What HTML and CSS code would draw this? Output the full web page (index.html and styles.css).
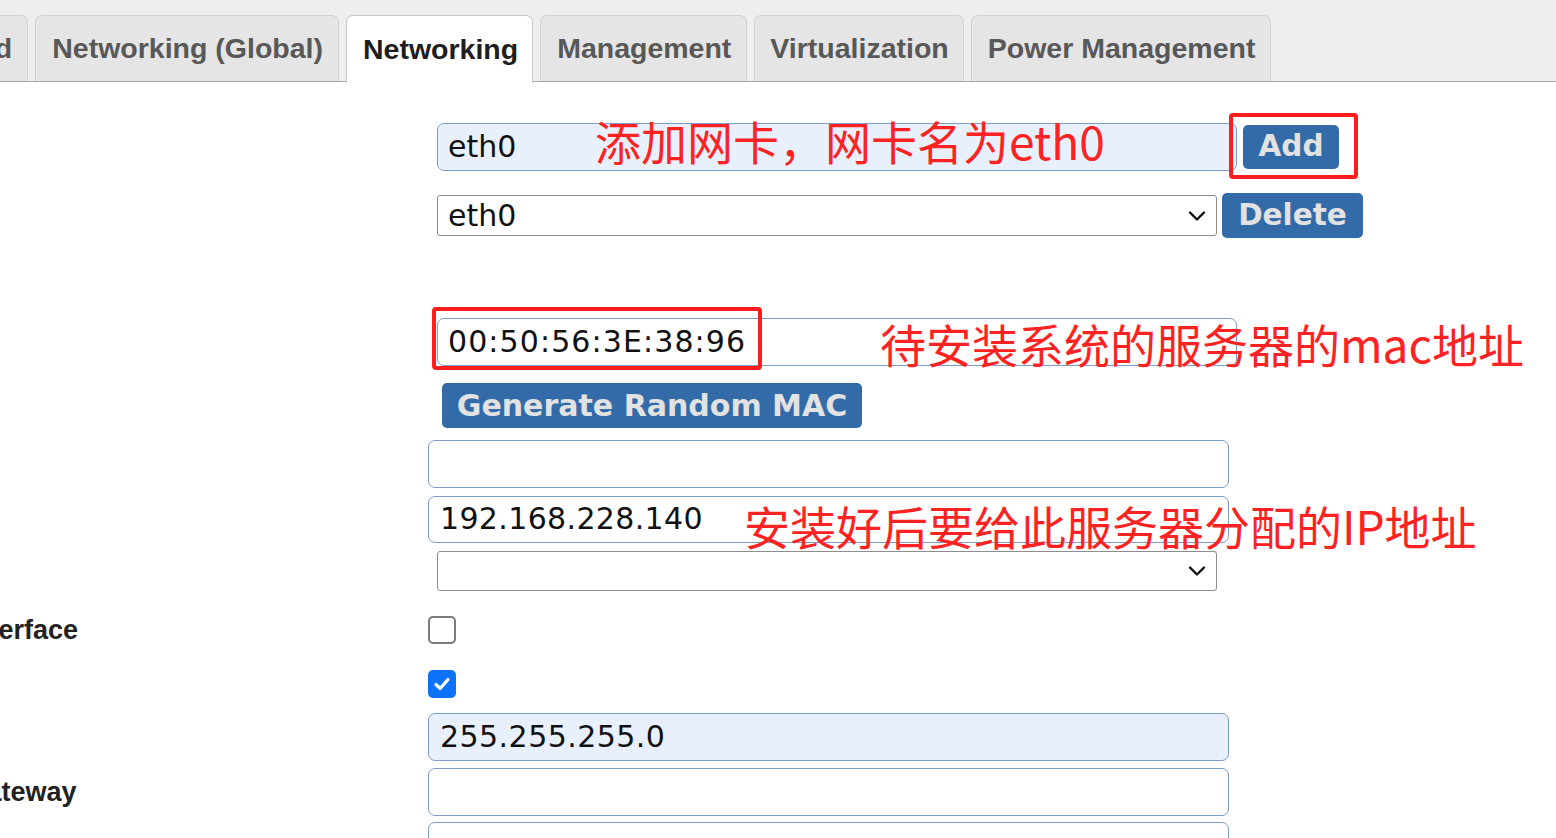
FILE: index.html
```html
<!DOCTYPE html>
<html lang="en">
<head>
<meta charset="utf-8">
<title>Edit System - Networking</title>
<link rel="stylesheet" href="styles.css">
</head>
<body>
<div class="page">
  <nav class="tabs">
    <span class="tab">Advanced</span>
    <span class="tab">Networking (Global)</span>
    <span class="tab tab-active">Networking</span>
    <span class="tab">Management</span>
    <span class="tab tab-virt">Virtualization</span>
    <span class="tab">Power Management</span>
  </nav>

  <form class="form">
    <div class="row row-name">
      <label class="lbl">Interface</label>
      <div class="field">
        <input class="text autofill inset" value="eth0">
        <button type="button" class="btn btn-add">Add</button>
        <span class="anno anno-name">添加网卡，网卡名为eth0</span>
        <span class="redbox redbox-add"></span>
      </div>
    </div>

    <div class="row row-select">
      <label class="lbl">Interfaces</label>
      <div class="field">
        <div class="select inset">
          <span>eth0</span>
          <svg class="chev" width="18" height="12" viewBox="0 0 18 12"><path d="M2 2.5 L9 9.5 L16 2.5" fill="none" stroke="#111" stroke-width="2.4" stroke-linecap="round" stroke-linejoin="round"/></svg>
        </div>
        <button type="button" class="btn btn-delete">Delete</button>
      </div>
    </div>

    <div class="row row-mac">
      <label class="lbl">MAC Address</label>
      <div class="field">
        <input class="text inset mac" value="00:50:56:3E:38:96">
        <span class="anno anno-mac">待安装系统的服务器的mac地址</span>
        <span class="redbox redbox-mac"></span>
      </div>
    </div>

    <div class="row row-gen">
      <span class="lbl"></span>
      <div class="field">
        <button type="button" class="btn btn-gen">Generate Random MAC</button>
      </div>
    </div>

    <div class="row row-mtu">
      <label class="lbl">MTU</label>
      <div class="field">
        <input class="text" value="">
      </div>
    </div>

    <div class="row row-ip">
      <label class="lbl">IP Address</label>
      <div class="field">
        <input class="text ip" value="192.168.228.140">
        <span class="anno anno-ip">安装好后要给此服务器分配的IP地址</span>
      </div>
    </div>

    <div class="row row-type">
      <label class="lbl">Interface Type</label>
      <div class="field">
        <div class="select select-short inset">
          <span></span>
          <svg class="chev" width="18" height="12" viewBox="0 0 18 12"><path d="M2 2.5 L9 9.5 L16 2.5" fill="none" stroke="#111" stroke-width="2.4" stroke-linecap="round" stroke-linejoin="round"/></svg>
        </div>
      </div>
    </div>

    <div class="row row-mgmt">
      <label class="lbl">Management Interface</label>
      <div class="field">
        <span class="check"></span>
      </div>
    </div>

    <div class="row row-static">
      <label class="lbl">Static</label>
      <div class="field">
        <span class="check check-on">
          <svg width="20" height="20" viewBox="0 0 20 20"><path d="M4 10.5 L8.2 14.5 L16 5.5" fill="none" stroke="#fff" stroke-width="3.2" stroke-linecap="round" stroke-linejoin="round"/></svg>
        </span>
      </div>
    </div>

    <div class="row row-mask">
      <label class="lbl">Subnet Mask</label>
      <div class="field">
        <input class="text autofill mask" value="255.255.255.0">
      </div>
    </div>

    <div class="row row-gw">
      <label class="lbl">Per-Interface Gateway</label>
      <div class="field">
        <input class="text" value="">
      </div>
    </div>

    <div class="row row-dns">
      <label class="lbl">DNS Name</label>
      <div class="field">
        <input class="text" value="">
      </div>
    </div>
  </form>
</div>
</body>
</html>
```

FILE: styles.css
```css
html, body {
  margin: 0;
  padding: 0;
  background: #ffffff;
  overflow: hidden;
}

.page {
  margin-left: -207px;
  font-family: "Liberation Sans", Arial, sans-serif;
}

/* ---------- tabs ---------- */
.tabs {
  display: flex;
  align-items: flex-start;
  gap: 7px;
  height: 66px;
  padding: 15px 0 0 66px;
  background: #eeeeee;
  border-bottom: 1px solid #a8a8a8;
}

.tab {
  display: flex;
  align-items: center;
  box-sizing: border-box;
  height: 66px;
  padding: 0 15px 0 16px;
  background: #e5e5e5;
  border: 1px solid #d2d2d2;
  border-bottom: none;
  border-radius: 7px 7px 0 0;
  font-weight: bold;
  font-size: 28.5px;
  color: #585858;
  white-space: nowrap;
}

.tab-active {
  height: 68px;
  padding: 0 14px 0 16px;
  background: #ffffff;
  color: #1e1e1e;
  border-color: #c8c8c8;
}

.tab-virt {
  padding: 0 14px 0 15px;
}

/* ---------- form rows ---------- */
.form {
  display: flex;
  flex-direction: column;
}

.row {
  display: grid;
  grid-template-columns: 635px 1fr;
  align-items: center;
}

.lbl {
  font-weight: bold;
  font-size: 27px;
  line-height: 28px;
  color: #222222;
  white-space: nowrap;
}

.field {
  position: relative;
  display: flex;
  align-items: center;
}

.row-name   { margin-top: 41px; }
.row-select { margin-top: 22px; }
.row-mac    { margin-top: 80px; }
.row-gen    { margin-top: 17px; }
.row-mtu    { margin-top: 12px; }
.row-ip     { margin-top: 8px; }
.row-type   { margin-top: 8px; }
.row-mgmt   { margin-top: 25px; }
.row-static { margin-top: 26px; }
.row-mask   { margin-top: 15px; }
.row-gw     { margin-top: 7px; }
.row-dns    { margin-top: 6px; }

/* ---------- inputs ---------- */
.text {
  box-sizing: border-box;
  width: 801px;
  height: 48px;
  margin: 0;
  padding: 0 0 2px 11px;
  border: 1.5px solid #7c9dcb;
  border-radius: 7px;
  background: #ffffff;
  font-family: "DejaVu Sans", Verdana, sans-serif;
  font-size: 30px;
  color: #111111;
  outline: none;
}

.row-ip .text { height: 47px; }

.text.inset {
  width: 800px;
  margin-left: 9px;
  padding-left: 10px;
}

.autofill {
  background: #e8f0fe;
}

.mac {
  letter-spacing: 1.1px;
}

.ip {
  letter-spacing: 0.35px;
}

.mask {
  letter-spacing: 0.45px;
}

.select {
  box-sizing: border-box;
  display: flex;
  align-items: center;
  justify-content: space-between;
  width: 780px;
  height: 41px;
  padding: 0 10px 0 10px;
  border: 1px solid #8d8d8d;
  border-radius: 3px;
  background: #ffffff;
  font-family: "DejaVu Sans", Verdana, sans-serif;
  font-size: 30px;
  color: #111111;
}

.select.inset { margin-left: 9px; }
.select-short { height: 40px; }

.chev { display: block; }

/* ---------- buttons ---------- */
.btn {
  box-sizing: border-box;
  margin: 0;
  border: none;
  border-radius: 5px;
  background: #336ba9;
  color: #e2e2e2;
  font-family: "DejaVu Sans", Verdana, sans-serif;
  font-weight: bold;
  font-size: 29.5px;
  line-height: 1;
  cursor: pointer;
}

.btn-add {
  width: 96px;
  height: 44px;
  margin-left: 6px;
}

.btn-delete {
  width: 141px;
  height: 45px;
  margin-left: 5px;
}

.btn-gen {
  width: 420px;
  height: 45px;
  margin-left: 14px;
  font-size: 30px;
}

/* ---------- checkboxes ---------- */
.check {
  box-sizing: border-box;
  display: flex;
  align-items: center;
  justify-content: center;
  width: 28px;
  height: 28px;
  border: 2px solid #7a7a7a;
  border-radius: 5px;
  background: #ffffff;
}

.check-on {
  border: none;
  background: #0b73fb;
}

/* ---------- annotations ---------- */
.anno {
  position: absolute;
  font-family: "Noto Sans CJK SC", "Microsoft YaHei", sans-serif;
  font-size: 46px;
  line-height: 46px;
  color: #ff2222;
  white-space: nowrap;
  pointer-events: none;
}

.anno-name { left: 167px; top: -6px; }
.anno-mac  { left: 452px; top: 2px; }
.anno-ip   { left: 316px; top: 6px; }

.redbox {
  position: absolute;
  box-sizing: border-box;
  border: 4px solid #ff1d1d;
  border-radius: 4px;
  pointer-events: none;
}

.redbox-add { left: 801px; top: -10px; width: 129px; height: 66px; }
.redbox-mac { left: 4px;   top: -11px; width: 330px; height: 63px; }
```
